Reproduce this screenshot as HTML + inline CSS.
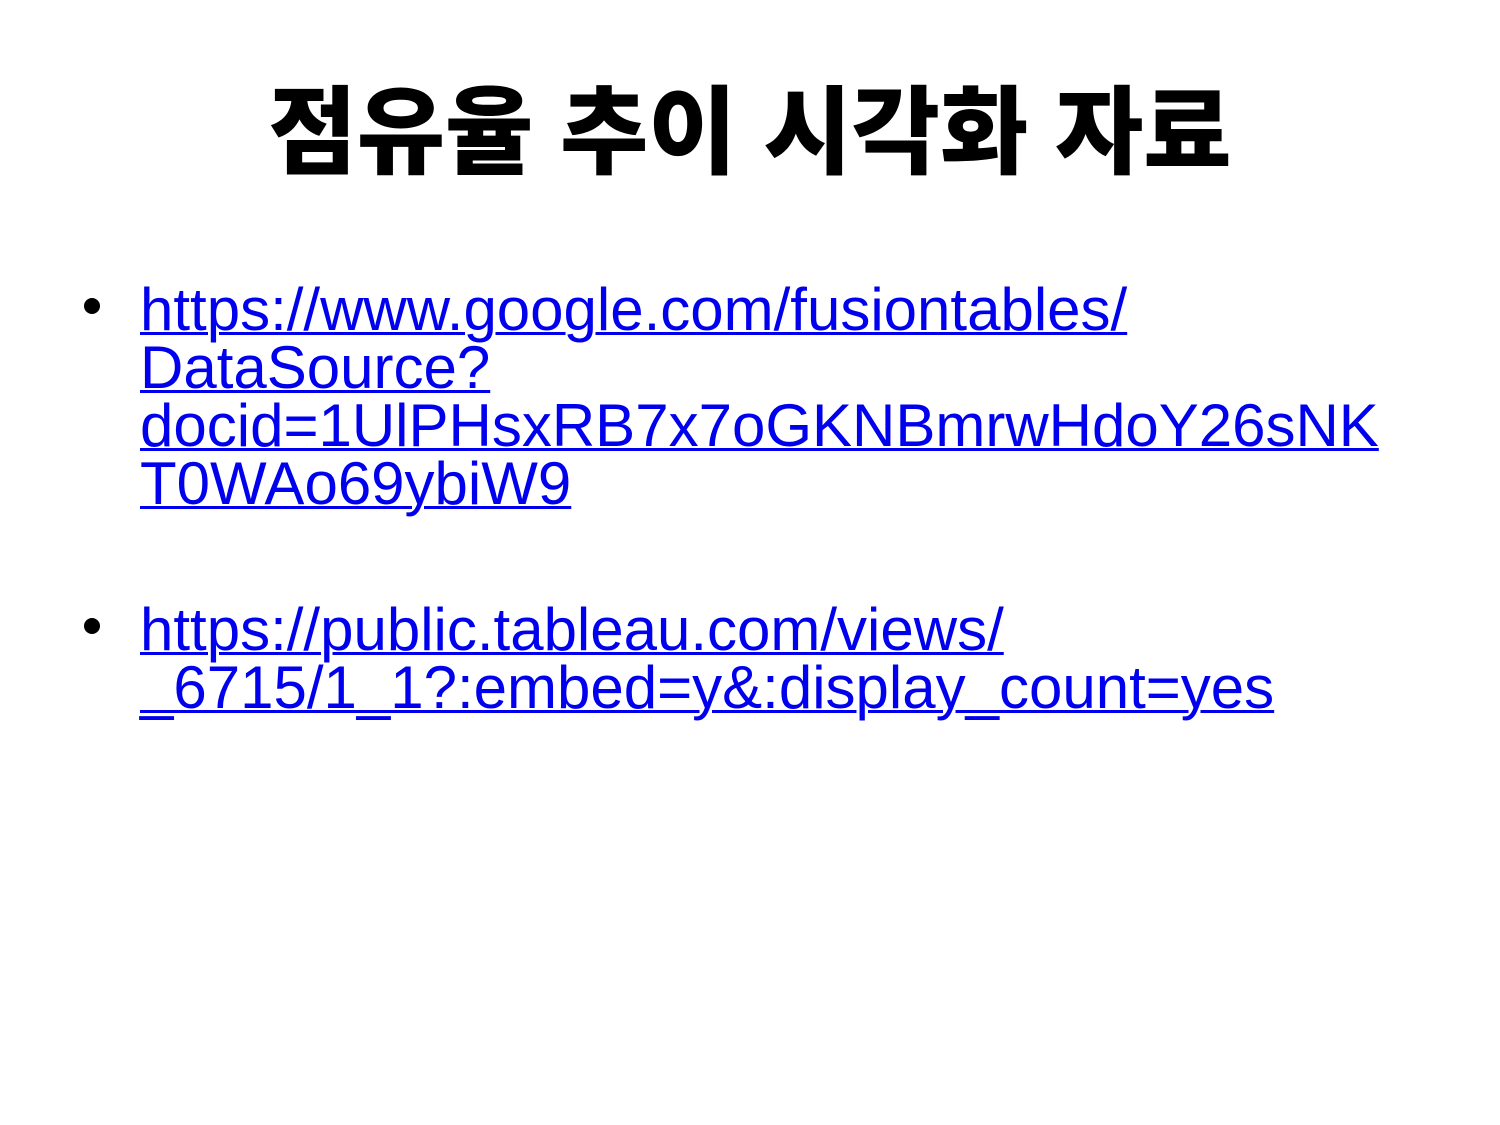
<!DOCTYPE html>
<html><head><meta charset="utf-8"><style>
html,body{margin:0;padding:0;background:#fff;width:1500px;height:1125px;overflow:hidden;position:relative}
.t{position:absolute;left:0;width:1500px;top:69px;text-align:center;font-family:"Liberation Sans","Noto Sans CJK KR",sans-serif;font-weight:900;font-size:96px;line-height:130px;color:#000;letter-spacing:0px}
.b{position:absolute;left:140px;font-family:"Liberation Sans",sans-serif;font-size:60px;line-height:58px;color:#0000ee;letter-spacing:0px}
.b a{color:#0000ee;text-decoration:underline;text-decoration-thickness:3px}
.dot{position:absolute;left:84px;width:16px;height:16px;border-radius:50%;background:#000}
</style></head><body>
<div class="t">점유율 추이 시각화 자료</div>
<div class="dot" style="top:298px"></div>
<div class="b" style="top:281px"><a>https://www.google.com/fusiontables/<br>DataSource?<br>docid=1UlPHsxRB7x7oGKNBmrwHdoY26sNK<br>T0WAo69ybiW9</a></div>
<div class="dot" style="top:618px"></div>
<div class="b" style="top:601px"><a>https://public.tableau.com/views/<br>_6715/1_1?:embed=y&amp;:display_count=yes</a></div>
</body></html>
